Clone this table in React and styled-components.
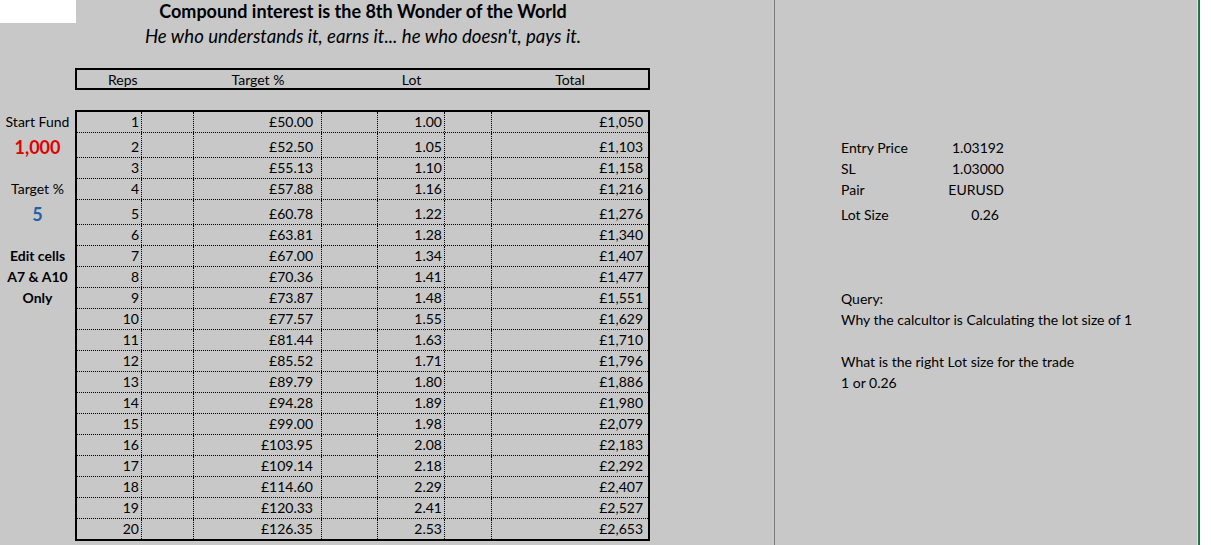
import React from "react";
import styled, { createGlobalStyle } from "styled-components";

const GlobalStyle = createGlobalStyle`
  html, body { margin: 0; padding: 0; background: #c8c8c8; }
  * { box-sizing: border-box; }
`;

const FONT = `Lato, "Open Sans", "Liberation Sans", sans-serif`;
const COLS = "65px 52px 128px 56px 67px 47px 156px";

const ROWS = [
  { reps: 1, target: "£50.00", lot: "1.00", total: "£1,050" },
  { reps: 2, target: "£52.50", lot: "1.05", total: "£1,103" },
  { reps: 3, target: "£55.13", lot: "1.10", total: "£1,158" },
  { reps: 4, target: "£57.88", lot: "1.16", total: "£1,216" },
  { reps: 5, target: "£60.78", lot: "1.22", total: "£1,276" },
  { reps: 6, target: "£63.81", lot: "1.28", total: "£1,340" },
  { reps: 7, target: "£67.00", lot: "1.34", total: "£1,407" },
  { reps: 8, target: "£70.36", lot: "1.41", total: "£1,477" },
  { reps: 9, target: "£73.87", lot: "1.48", total: "£1,551" },
  { reps: 10, target: "£77.57", lot: "1.55", total: "£1,629" },
  { reps: 11, target: "£81.44", lot: "1.63", total: "£1,710" },
  { reps: 12, target: "£85.52", lot: "1.71", total: "£1,796" },
  { reps: 13, target: "£89.79", lot: "1.80", total: "£1,886" },
  { reps: 14, target: "£94.28", lot: "1.89", total: "£1,980" },
  { reps: 15, target: "£99.00", lot: "1.98", total: "£2,079" },
  { reps: 16, target: "£103.95", lot: "2.08", total: "£2,183" },
  { reps: 17, target: "£109.14", lot: "2.18", total: "£2,292" },
  { reps: 18, target: "£114.60", lot: "2.29", total: "£2,407" },
  { reps: 19, target: "£120.33", lot: "2.41", total: "£2,527" },
  { reps: 20, target: "£126.35", lot: "2.53", total: "£2,653" },
];

const rowHeight = (i) => {
  if (i === 1 || i === 4) return 25;
  if (i === ROWS.length - 1) return 20;
  return 21;
};

const LABELS = [
  { text: "Start Fund" },
  { text: "1,000", kind: "red" },
  null,
  { text: "Target %" },
  { text: "5", kind: "blue" },
  null,
  { text: "Edit cells", kind: "bold" },
  { text: "A7 & A10", kind: "bold" },
  { text: "Only", kind: "bold" },
];

const INFO = [
  null,
  { label: "Entry Price", value: "1.03192" },
  { label: "SL", value: "1.03000" },
  { label: "Pair", value: "EURUSD" },
  { label: "Lot Size", value: "0.26", inset: 8 },
  null,
  null,
  null,
  { label: "Query:" },
  { label: "Why the calcultor is Calculating the lot size of 1" },
  null,
  { label: "What is the right Lot size for the trade" },
  { label: "1 or 0.26" },
];

const Page = styled.div`
  display: flex;
  width: 1211px;
  height: 545px;
  overflow: hidden;
  background: #c8c8c8;
  font-family: ${FONT};
  color: #000;
`;

const LeftPane = styled.div`
  width: 775px;
  flex: none;
  border-right: 1px solid #7c7c7c;
`;

const RightPane = styled.div`
  flex: 1;
  padding: 112px 0 0 66px;
`;

const EdgeBar = styled.div`
  width: 3px;
  flex: none;
  border-left: 1px solid #e4e4e4;
  background: #217346;
`;

const WhiteStrip = styled.div`
  width: 11px;
  flex: none;
  background: #fff;
`;

const TitleRow = styled.div`
  display: flex;
  height: 23px;
`;

const Corner = styled.div`
  width: 76px;
  height: 23px;
  background: #fff;
`;

const Title = styled.div`
  width: 574px;
  text-align: center;
  font-weight: 700;
  font-size: 18px;
  line-height: 23px;
  white-space: nowrap;
`;

const Subtitle = styled.div`
  margin-left: 76px;
  width: 574px;
  height: 24px;
  text-align: center;
  font-style: italic;
  font-size: 18.6px;
  line-height: 26px;
  white-space: nowrap;
`;

const HeaderBox = styled.div`
  margin: 21px 0 0 75px;
  width: 575px;
  height: 22px;
  border: 2px solid #000;
  display: grid;
  grid-template-columns: ${COLS};
  font-size: 14px;
  line-height: 20px;
`;

const HeaderCell = styled.div`
  grid-column: ${(p) => p.$col};
  text-align: ${(p) => (p.$left ? "left" : "center")};
  padding-left: ${(p) => p.$left || 0}px;
`;

const Body = styled.div`
  display: flex;
  margin-top: 20px;
`;

const LabelColumn = styled.div`
  width: 75px;
  padding-top: 1px;
`;

const LabelRow = styled.div`
  height: ${(p) => p.$h}px;
  display: flex;
  align-items: flex-end;
  justify-content: center;
  white-space: nowrap;
  line-height: 20px;
  font-size: ${(p) => (p.$kind === "red" || p.$kind === "blue" ? 18 : 14)}px;
  font-weight: ${(p) => (p.$kind ? 700 : 400)};
  color: ${(p) =>
    p.$kind === "red" ? "#e00000" : p.$kind === "blue" ? "#1f62a6" : "#000"};
`;

const Table = styled.div`
  width: 575px;
  border: 2px solid #000;
`;

const TableRow = styled.div`
  display: grid;
  grid-template-columns: ${COLS};
  height: ${(p) => p.$h}px;
  border-bottom: 1px dotted #000;
  &:last-child {
    border-bottom: none;
  }
`;

const Cell = styled.div`
  display: flex;
  align-items: flex-end;
  justify-content: flex-end;
  padding-right: ${(p) => p.$pad || 0}px;
  font-size: 14px;
  line-height: 20px;
  white-space: nowrap;
  border-right: 1px dotted #000;
  &:last-child {
    border-right: none;
  }
`;

const InfoRow = styled.div`
  display: flex;
  align-items: flex-end;
  height: ${(p) => p.$h}px;
  font-size: 14px;
  line-height: 20px;
  white-space: nowrap;
`;

const InfoLabel = styled.div`
  width: 100px;
  flex: none;
`;

const InfoValue = styled.div`
  width: 66px;
  flex: none;
  text-align: right;
  padding-right: ${(p) => p.$inset}px;
`;

export default function App() {
  return (
    <>
      <GlobalStyle />
      <Page>
        <LeftPane>
          <TitleRow>
            <Corner />
            <Title>Compound interest is the 8th Wonder of the World</Title>
          </TitleRow>
          <Subtitle>He who understands it, earns it... he who doesn't, pays it.</Subtitle>
          <HeaderBox>
            <HeaderCell $col="1 / span 2" $left={31}>Reps</HeaderCell>
            <HeaderCell $col="3">Target %</HeaderCell>
            <HeaderCell $col="5">Lot</HeaderCell>
            <HeaderCell $col="7">Total</HeaderCell>
          </HeaderBox>
          <Body>
            <LabelColumn>
              {LABELS.map((l, i) => (
                <LabelRow key={i} $h={rowHeight(i)} $kind={l && l.kind}>
                  {l ? l.text : ""}
                </LabelRow>
              ))}
            </LabelColumn>
            <Table>
              {ROWS.map((r, i) => (
                <TableRow key={r.reps} $h={rowHeight(i)}>
                  <Cell $pad={2}>{r.reps}</Cell>
                  <Cell />
                  <Cell $pad={8}>{r.target}</Cell>
                  <Cell />
                  <Cell $pad={2}>{r.lot}</Cell>
                  <Cell />
                  <Cell $pad={5}>{r.total}</Cell>
                </TableRow>
              ))}
            </Table>
          </Body>
        </LeftPane>
        <RightPane>
          {INFO.map((it, i) => (
            <InfoRow key={i} $h={rowHeight(i)}>
              {it && <InfoLabel>{it.label}</InfoLabel>}
              {it && it.value && <InfoValue $inset={it.inset || 3}>{it.value}</InfoValue>}
            </InfoRow>
          ))}
        </RightPane>
        <EdgeBar />
        <WhiteStrip />
      </Page>
    </>
  );
}
